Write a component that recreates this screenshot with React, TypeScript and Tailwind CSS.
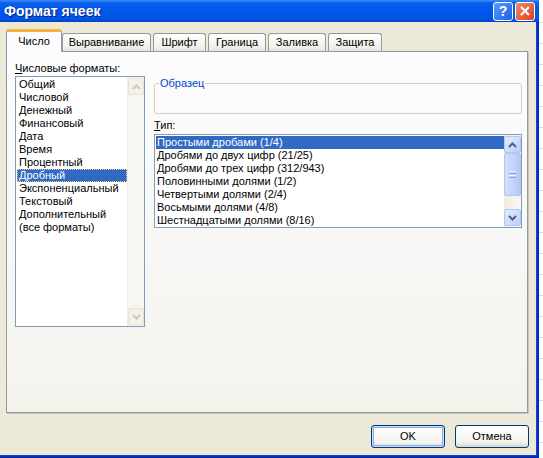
import React from 'react';

const formats = [
  'Общий',
  'Числовой',
  'Денежный',
  'Финансовый',
  'Дата',
  'Время',
  'Процентный',
  'Дробный',
  'Экспоненциальный',
  'Текстовый',
  'Дополнительный',
  '(все форматы)',
];

const types = [
  'Простыми дробами (1/4)',
  'Дробями до двух цифр (21/25)',
  'Дробями до трех цифр (312/943)',
  'Половинными долями (1/2)',
  'Четвертыми долями (2/4)',
  'Восьмыми долями (4/8)',
  'Шестнадцатыми долями (8/16)',
];

const tabs = [
  { label: 'Выравнивание', w: 'w-[89px]' },
  { label: 'Шрифт', w: 'w-[53px] ml-[2px]' },
  { label: 'Граница', w: 'w-[58px] ml-[2px]' },
  { label: 'Заливка', w: 'w-[58px] ml-[2px]' },
  { label: 'Защита', w: 'w-[54px] ml-[2px]' },
];

function Chevron({ up, color }: { up?: boolean; color: string }) {
  return (
    <svg width="9" height="6" viewBox="0 0 9 6">
      <path
        d={up ? 'M1 5 L4.5 1.5 L8 5' : 'M1 1 L4.5 4.5 L8 1'}
        fill="none"
        stroke={color}
        strokeWidth="2"
      />
    </svg>
  );
}

function ScrollButton({ up, disabled }: { up?: boolean; disabled?: boolean }) {
  return (
    <div
      className={
        disabled
          ? 'h-[17px] flex items-center justify-center rounded-[2px] border border-[#E6E4D8] bg-[#F3F2EA]'
          : 'h-[17px] flex items-center justify-center rounded-[2px] border border-[#B2C6F4] bg-[linear-gradient(135deg,#E6EDFE,#BBCEF7)]'
      }
    >
      <Chevron up={up} color={disabled ? '#CBC9BC' : '#4D6185'} />
    </div>
  );
}

export default function App() {
  return (
    <div className="w-[543px] h-[458px] flex overflow-hidden bg-white font-['Liberation_Sans',Arial,sans-serif] text-[11px] leading-[13px] text-black">
      <div className="w-[539px] flex flex-col">
        {/* Title bar */}
        <div className="h-[22px] flex items-center pl-[4px] pr-[4px] bg-[linear-gradient(to_bottom,#3D8DFB_0%,#0A5EEB_14%,#0057E8_50%,#0054E2_86%,#0043C4_100%)]">
          <div className="flex-1 text-white font-bold text-[14px] [text-shadow:1px_1px_#0A1E8C]">
            Формат ячеек
          </div>
          <div className="w-[20px] h-[19px] rounded-[3px] border border-white bg-[linear-gradient(135deg,#5E9BFF,#1E5FE6)] flex items-center justify-center text-white font-bold text-[14px] leading-none">
            ?
          </div>
          <div className="w-[20px] h-[19px] ml-[2px] rounded-[3px] border border-white bg-[linear-gradient(135deg,#F08B6C,#D8431F)] flex items-center justify-center">
            <svg width="10" height="10" viewBox="0 0 10 10">
              <path d="M1 1 L9 9 M9 1 L1 9" stroke="white" strokeWidth="2" />
            </svg>
          </div>
        </div>

        <div className="flex-1 flex">
          {/* Dialog body */}
          <div className="flex-1 bg-[#ECE9D8] flex flex-col pl-[6px] pt-[7px] pr-[7px]">
            {/* Tabs */}
            <div className="h-[22px] flex items-end">
              <div className="relative z-10 w-[56px] h-[23px] -mb-px rounded-t-[3px] border-x border-[#919B9C] border-t-[3px] border-t-[#F7B23B] bg-[#FCFCFE] flex items-center justify-center pb-[2px]">
                Число
              </div>
              {tabs.map(t => (
                <div
                  key={t.label}
                  className={`${t.w} h-[18px] rounded-t-[3px] border-x border-t border-[#919B9C] bg-[linear-gradient(to_bottom,#FFFFFF,#F3F2EC_70%,#E5E4DC)] flex items-center justify-center`}
                >
                  {t.label}
                </div>
              ))}
            </div>

            {/* Panel */}
            <div className="w-[522px] h-[362px] border border-[#919B9C] shadow-[1px_1px_0_#C9C7BA] bg-[linear-gradient(to_bottom,#FCFCFE,#F4F3EE)] flex items-start pt-[10px] pl-[8px]">
              {/* Left column */}
              <div className="w-[130px] flex flex-col">
                <div className="h-[13px] mb-[1px]">
                  <u>Ч</u>исловые форматы:
                </div>
                <div className="h-[251px] border border-[#7F9DB9] bg-white flex">
                  <div className="flex-1 pt-[1px] pl-[1px]">
                    {formats.map(f => (
                      <div
                        key={f}
                        className={
                          f === 'Дробный'
                            ? 'h-[13px] pl-[1px] bg-[#316AC5] text-white border border-dotted border-[#E8D27A] leading-[11px]'
                            : 'h-[13px] pl-[2px]'
                        }
                      >
                        {f}
                      </div>
                    ))}
                  </div>
                  <div className="w-[17px] flex flex-col bg-[#F7F6F0] border-l border-[#EFEEE6] py-[1px]">
                    <ScrollButton up disabled />
                    <div className="flex-1" />
                    <ScrollButton disabled />
                  </div>
                </div>
              </div>

              {/* Right column */}
              <div className="w-[368px] ml-[9px] mt-[15px] flex flex-col">
                <fieldset className="border border-[#D0D0BF] rounded-[3px]">
                  <legend className="ml-[4px] px-[1px] text-[#0046D5] leading-[13px]">Образец</legend>
                  <div className="h-[23px]" />
                </fieldset>
                <div className="h-[13px] mt-[5px] mb-[2px]">
                  <u>Т</u>ип:
                </div>
                <div className="h-[94px] border border-[#7F9DB9] bg-white flex">
                  <div className="flex-1 pt-[1px] pl-[1px] overflow-hidden">
                    {types.map((t, i) => (
                      <div
                        key={t}
                        className={i === 0 ? 'h-[13px] pl-[1px] bg-[#316AC5] text-white' : 'h-[13px] pl-[1px]'}
                      >
                        {t}
                      </div>
                    ))}
                  </div>
                  <div className="w-[17px] flex flex-col bg-[linear-gradient(to_right,#EEEDE5,#F8F7F2)] py-[1px]">
                    <ScrollButton up />
                    <div className="h-[43px] rounded-[2px] border border-[#B2C6F4] bg-[linear-gradient(to_right,#D3DEFC,#C2D2FA_60%,#B4C7F5)] flex flex-col items-center justify-center gap-[1px]">
                      <div className="w-[7px] h-px bg-[#EEF3FF]" />
                      <div className="w-[7px] h-px bg-[#8CA4DE]" />
                      <div className="w-[7px] h-px bg-[#EEF3FF]" />
                      <div className="w-[7px] h-px bg-[#8CA4DE]" />
                    </div>
                    <div className="flex-1" />
                    <ScrollButton />
                  </div>
                </div>
              </div>
            </div>

            {/* Buttons */}
            <div className="mt-[12px] flex justify-end gap-[10px]">
              <div className="w-[74px] h-[23px] rounded-[3px] border border-[#003C74] bg-[linear-gradient(to_bottom,#FFFFFF,#F3F2EC_80%,#D6D0C5)] shadow-[inset_0_0_0_1px_#C9DCFB,inset_0_0_0_2px_#8BADEB] flex items-center justify-center">
                OK
              </div>
              <div className="w-[74px] h-[23px] rounded-[3px] border border-[#003C74] bg-[linear-gradient(to_bottom,#FFFFFF,#F3F2EC_80%,#D6D0C5)] flex items-center justify-center">
                Отмена
              </div>
            </div>
          </div>
          {/* Right frame */}
          <div className="w-[3px] bg-[linear-gradient(to_right,#0A4CD9,#0019B8)]" />
        </div>
        {/* Bottom frame */}
        <div className="h-[3px] bg-[linear-gradient(to_bottom,#0A4CD9,#0019B0)]" />
      </div>

      {/* Spreadsheet glimpse behind the dialog */}
      <div className="flex-1 flex flex-col pt-[2px]">
        {Array.from({ length: 22 }).map((_, i) => (
          <div key={i} className="h-[21px] shrink-0 border-b border-[#DADADA]" />
        ))}
      </div>
    </div>
  );
}
